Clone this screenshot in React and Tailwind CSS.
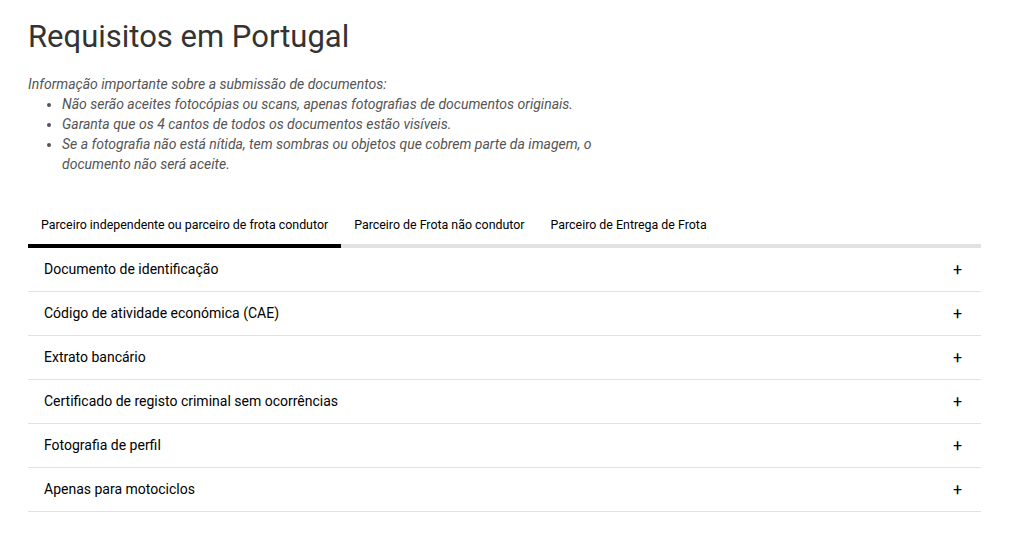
import { useState } from 'react';

const tabs = [
  'Parceiro independente ou parceiro de frota condutor',
  'Parceiro de Frota não condutor',
  'Parceiro de Entrega de Frota',
];

const items = [
  'Documento de identificação',
  'Código de atividade económica (CAE)',
  'Extrato bancário',
  'Certificado de registo criminal sem ocorrências',
  'Fotografia de perfil',
  'Apenas para motociclos',
];

const App = () => {
  const [active, setActive] = useState(0);

  return (
    <div className="min-h-screen bg-white px-[28px] pt-[17px] text-black" style={{ fontFamily: 'Roboto, "Noto Sans", sans-serif' }}>
      <h1 className="text-[31px] leading-[40px] text-[#333]">Requisitos em Portugal</h1>

      <div className="mt-[17px] text-[14px] leading-[20px] italic text-[#545454]">
        <p>Informação importante sobre a submissão de documentos:</p>
        <ul className="list-disc pl-[34px] w-[600px]">
          <li>Não serão aceites fotocópias ou scans, apenas fotografias de documentos originais.</li>
          <li>Garanta que os 4 cantos de todos os documentos estão visíveis.</li>
          <li>Se a fotografia não está nítida, tem sombras ou objetos que cobrem parte da imagem, o documento não será aceite.</li>
        </ul>
      </div>

      <div className="mt-[36px] w-[953px]">
        <div className="flex border-b-4 border-[#e2e2e2]">
          {tabs.map((t, i) => (
            <button
              key={t}
              onClick={() => setActive(i)}
              className={`px-[13px] pt-[7px] pb-[11px] text-[12.4px] leading-[16px] -mb-[4px] border-b-4 ${i === active ? 'border-black' : 'border-transparent'}`}
            >
              {t}
            </button>
          ))}
        </div>
        <div>
          {items.map((it) => (
            <div key={it} className="flex items-center justify-between h-[44px] border-b border-[#e2e2e2] pl-[16px] pr-[19px]">
              <span className="text-[14px] font-normal">{it}</span>
              <span className="text-[16px] leading-none">+</span>
            </div>
          ))}
        </div>
      </div>
    </div>
  );
};

export default App;
